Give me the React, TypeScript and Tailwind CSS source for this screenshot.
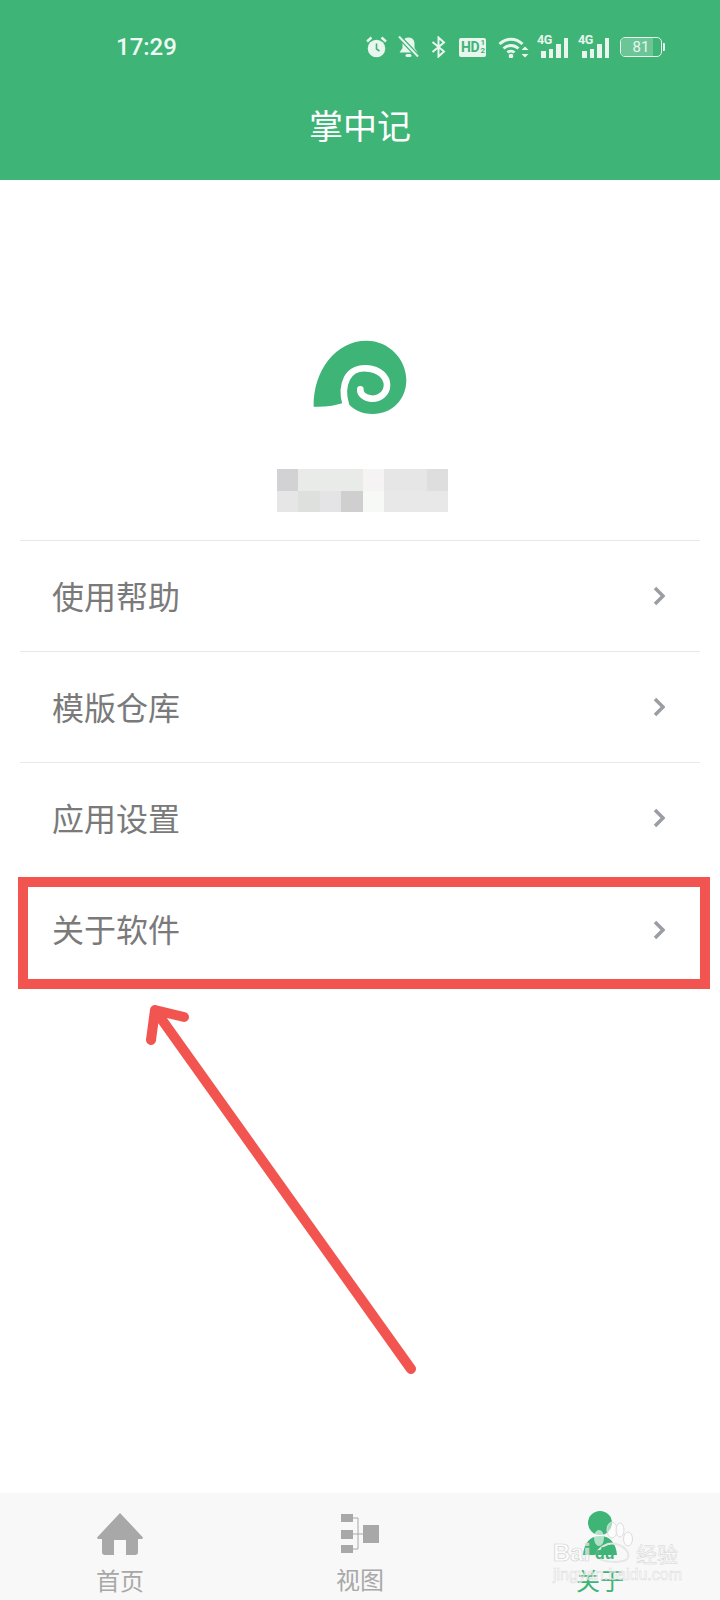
import React from "react";

const cjk = "font-['Noto_Sans_CJK_SC','Noto_Sans',sans-serif]";
const menuItems = ["使用帮助", "模版仓库", "应用设置", "关于软件"];

const blurCells = [
  "#d2d1d3", "#e8ebe8", "#e8ebe8", "#e8ebe8", "#f6f3f5", "#e6e6e6", "#e6e6e6", "#dedede",
  "#e6e6e6", "#dde0dc", "#e4e3e5", "#cfcfd0", "#f6f9f6", "#e8e8e8", "#e8e8e8", "#e8e8e8",
];

const AlarmIcon = () => (
  <svg width="21" height="22" viewBox="0 0 21 22">
    <circle cx="10.5" cy="12.500" r="8.800" fill="#e8f6ee" />
    <path d="M10.500 7.500v5.500l3 2" fill="none" stroke="#3eb477" strokeWidth="1.600" />
    <path d="M1 5.500l4.500-4M20 5.500l-4.500-4" fill="none" stroke="#e8f6ee" strokeWidth="2.400" />
  </svg>
);

const BellOffIcon = () => (
  <svg width="21" height="22" viewBox="0 0 21 22">
    <path d="M10.500 1.500c4.500 0 6 3 6 6.500v4l3 4.500H1.500l3-4.500V8c0-3.500 1.500-6.500 6-6.500z" fill="#e8f6ee" />
    <rect x="7.500" y="18" width="6" height="3" rx="1.500" fill="#e8f6ee" />
    <path d="M1 0.500l19 20" stroke="#3eb477" strokeWidth="4.500" />
    <path d="M1 0.500l19 20" stroke="#e8f6ee" strokeWidth="2" />
  </svg>
);

const BluetoothIcon = () => (
  <svg width="15" height="22" viewBox="0 0 15 22">
    <path d="M1.500 6l11.500 9.500-5.500 5V1.500L13 6.500 1.500 16" fill="none" stroke="#e8f6ee" strokeWidth="2" />
  </svg>
);

const HdBadge = () => (
  <div className="flex h-[19px] w-[27px] items-center justify-between rounded-[2px] bg-[#e8f6ee] pl-[2px] pr-[1px] font-['Roboto',sans-serif] text-[#3eb477]">
    <span className="text-[14px] leading-none font-bold tracking-[-0.5px]">HD</span>
    <span className="flex flex-col text-[8px] leading-[8px] font-bold">
      <span>1</span>
      <span>2</span>
    </span>
  </div>
);

const WifiIcon = () => (
  <svg width="31" height="22" viewBox="0 0 31 22">
    <path d="M1.500 8c7-6.500 16-6.500 23 0M5.500 12.500c4.500-4 10.500-4 15 0M9.500 16.500c2-1.800 5-1.800 7 0" fill="none" stroke="#e8f6ee" strokeWidth="3" />
    <circle cx="13" cy="20" r="2.300" fill="#e8f6ee" />
    <path d="M27 10.500l3.500 3.500h-7zM27 21.500l3.500-3.500h-7z" fill="#e8f6ee" />
  </svg>
);

const Signal = () => (
  <div className="relative h-[22px] w-[31px]">
    <span className="absolute top-[-3px] left-0 font-['Roboto',sans-serif] text-[12.5px] leading-[14px] font-bold tracking-[-0.5px] text-[#e8f6ee]">4G</span>
    <div className="absolute right-0 bottom-0 flex items-end gap-[3px]">
      <div className="h-[7px] w-[4.500px] bg-[#e8f6ee]" />
      <div className="h-[9px] w-[4.500px] bg-[#e8f6ee]" />
      <div className="h-[14px] w-[4.500px] bg-[#e8f6ee]" />
      <div className="h-[20px] w-[4.500px] bg-[#e8f6ee]" />
    </div>
  </div>
);

const Battery = () => (
  <div className="flex items-center">
    <div className="relative flex h-[20px] w-[42px] items-center justify-center overflow-hidden rounded-[5px] border-[1.5px] border-[#e8f6ee] font-['Roboto',sans-serif] text-[15px] leading-none text-[#e8f6ee]">
      <div className="absolute inset-y-0 left-0 w-[80%] bg-[#6cc597]" />
      <span className="relative">81</span>
    </div>
    <div className="ml-[1px] h-[8px] w-[2px] rounded-r-[1px] bg-[#e8f6ee]" />
  </div>
);

const ShellLogo = () => (
  <svg width="95" height="75" viewBox="160 60 285 225">
    <path d="M162 260C160 150 230 62 320 62C390 62 440 120 440 180C440 240 395 282 340 282C305 282 278 268 262 245C225 258 190 262 162 260Z" fill="#3eb477" />
    <path d="M258 252C250 225 252 195 262 175C275 150 300 143 322 145C360 148 382 170 382 195C382 222 358 238 335 236C315 234 300 222 302 208" fill="none" stroke="#fff" strokeWidth="20" strokeLinecap="round" />
  </svg>
);

const HomeIcon = () => (
  <svg width="48" height="44" viewBox="0 0 48 44">
    <path d="M24 1L47 25.500Q47 27 45 27H42V40Q42 43 39 43H30V28H18V43H9Q6 43 6 40V27H3Q1 27 1 25.500Z" fill="#a8a8a8" />
  </svg>
);

const TreeIcon = () => (
  <svg width="40" height="40" viewBox="0 0 40 40">
    <path d="M13 4h5v31h-5M13 20h10" fill="none" stroke="#a8a8a8" strokeWidth="1" />
    <rect x="1" y="0" width="12" height="8" fill="#a8a8a8" />
    <rect x="1" y="16" width="12" height="9" fill="#a8a8a8" />
    <rect x="1" y="31" width="12" height="8" fill="#a8a8a8" />
    <rect x="23" y="11" width="16" height="18" fill="#a8a8a8" />
  </svg>
);

const PersonIcon = () => (
  <svg width="48" height="46" viewBox="0 0 48 46">
    <circle cx="24" cy="13" r="12" fill="#3eb477" />
    <path d="M7 45C8 33 14 26 24 26C34 26 40 33 41 45Z" fill="#3eb477" />
  </svg>
);

const Watermark = () => (
  <div className="pointer-events-none absolute top-[1516px] left-[552px] h-[76px] w-[132px] text-[#ffffff99]">
    <svg className="absolute top-[4px] left-[36px]" width="50" height="46" viewBox="0 0 50 46">
      <ellipse cx="11" cy="18" rx="5" ry="8" fill="#ffffff99" />
      <ellipse cx="24" cy="10" rx="5" ry="8" fill="#ffffff88" stroke="#dcdcdc" />
      <ellipse cx="32" cy="10" rx="4" ry="7" fill="#ffffff88" stroke="#dcdcdc" />
      <ellipse cx="40" cy="19" rx="4.500" ry="7" fill="#ffffff88" stroke="#dcdcdc" />
      <path d="M8 36C10 27 20 22 28 24C36 26 42 32 40 38C38 43 14 44 8 36Z" fill="none" stroke="#e6e6e6" strokeWidth="2" />
    </svg>
    <span className="absolute top-[23px] left-[1px] font-['Liberation_Sans',sans-serif] text-[24px] leading-[28px] font-bold [-webkit-text-stroke:0.7px_#d4d4d4]">Bai</span>
    <span className="absolute top-[28px] left-[43px] font-['Liberation_Sans',sans-serif] text-[16px] leading-[20px] font-bold text-[#3eb477]">du</span>
    <span className={`absolute top-[22px] left-[84px] text-[21px] leading-[30px] whitespace-nowrap [-webkit-text-stroke:0.5px_#d4d4d4] ${cjk}`}>经验</span>
    <span className="absolute top-[50px] left-[1px] font-['Liberation_Sans',sans-serif] text-[16px] leading-[18px] whitespace-nowrap [-webkit-text-stroke:0.4px_#d4d4d4]">jingyan.baidu.com</span>
  </div>
);

const App: React.FC = () => {
  return (
    <div className={`relative flex h-[1600px] w-[720px] flex-col overflow-hidden bg-white ${cjk}`}>
      {/* header */}
      <div className="flex h-[180px] flex-col bg-[#3eb477] pt-[36px]">
        <div className="flex h-[22px] items-center pl-[116px]">
          <span className="w-[250px] font-['Roboto',sans-serif] text-[24px] leading-none font-medium text-[#f0faf4]">17:29</span>
          <div className="flex items-center">
            <AlarmIcon />
            <div className="ml-[11px]"><BellOffIcon /></div>
            <div className="ml-[12px]"><BluetoothIcon /></div>
            <div className="ml-[13px]"><HdBadge /></div>
            <div className="ml-[12px]"><WifiIcon /></div>
            <div className="ml-[8px]"><Signal /></div>
            <div className="ml-[10px]"><Signal /></div>
            <div className="ml-[11px]"><Battery /></div>
          </div>
        </div>
        <div className="mt-[43px] text-center text-[34px] leading-[48px] text-white">掌中记</div>
      </div>

      {/* logo and blurred name */}
      <div className="flex flex-1 flex-col">
        <div className="flex flex-col items-center pt-[160px]">
          <ShellLogo />
          <div className="mt-[54px] ml-[5px] grid h-[43px] w-[171px] grid-cols-8 grid-rows-2">
            {blurCells.map((color, i) => (
              <div key={i} style={{ backgroundColor: color }} />
            ))}
          </div>
        </div>

        <div className="mx-[20px] mt-[28px]">
          {menuItems.map((label) => (
            <div key={label} className="flex h-[111.2px] items-center justify-between border-t border-[#e8e8e8] pr-[35px] pl-[32px] last:border-t-transparent">
              <span className="mb-[3px] text-[32px] leading-none text-[#7a7a7a]">{label}</span>
              <svg width="12" height="20" viewBox="0 0 12 20">
                <path d="M2 2l8 8-8 8" fill="none" stroke="#9a9ea3" strokeWidth="3.500" />
              </svg>
            </div>
          ))}
        </div>
      </div>

      {/* tab bar */}
      <div className="grid h-[107px] grid-cols-3 bg-[#f8f8f8]">
        <div className="flex flex-col items-center pt-[19px]">
          <HomeIcon />
          <span className="mt-[9px] text-[24px] leading-[30px] text-[#a8a8a8]">首页</span>
        </div>
        <div className="flex flex-col items-center pt-[21px]">
          <TreeIcon />
          <span className="mt-[10px] text-[24px] leading-[30px] text-[#a8a8a8]">视图</span>
        </div>
        <div className="flex flex-col items-center pt-[17px]">
          <PersonIcon />
          <span className="mt-[9px] text-[24px] leading-[30px] text-[#3eb477]">关于</span>
        </div>
      </div>

      {/* annotation drawn over the screenshot */}
      <div className="absolute top-[877px] left-[18px] h-[112px] w-[692px] border-[10px] border-[#f25550]" />
      <svg className="absolute top-0 left-0" width="720" height="1600" viewBox="0 0 720 1600">
        <path d="M411 1369L155 1010M151 1040L155 1010L184 1017" fill="none" stroke="#f25550" strokeWidth="10" strokeLinecap="round" strokeLinejoin="round" />
      </svg>
      <Watermark />
    </div>
  );
};

export default App;
